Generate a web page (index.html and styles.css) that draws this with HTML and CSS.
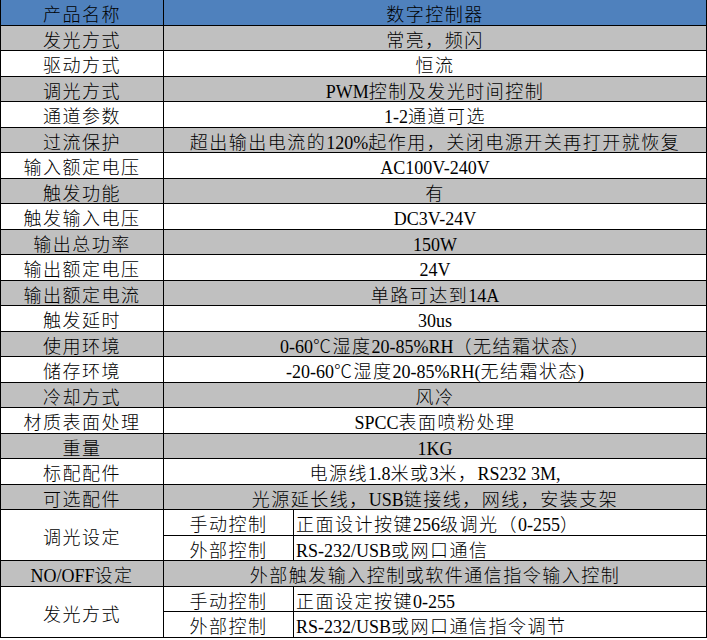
FILE: index.html
```html
<!DOCTYPE html>
<html lang="zh-CN">
<head>
<meta charset="utf-8">
<title>数字控制器参数</title>
<link rel="stylesheet" href="styles.css">
</head>
<body>
<table class="spec">
  <colgroup>
    <col class="c-name">
    <col class="c-sub">
    <col class="c-val">
  </colgroup>
  <tbody>
    <tr class="head"><td>产品名称</td><td colspan="2">数字控制器</td></tr>
    <tr class="gray"><td>发光方式</td><td colspan="2">常亮，频闪</td></tr>
    <tr><td>驱动方式</td><td colspan="2">恒流</td></tr>
    <tr class="gray"><td>调光方式</td><td colspan="2"><span class="en">PWM</span>控制及发光时间控制</td></tr>
    <tr><td>通道参数</td><td colspan="2"><span class="en">1-2</span>通道可选</td></tr>
    <tr class="gray"><td>过流保护</td><td colspan="2">超出输出电流的<span class="en">120%</span>起作用，关闭电源开关再打开就恢复</td></tr>
    <tr><td>输入额定电压</td><td colspan="2"><span class="en">AC100V-240V</span></td></tr>
    <tr class="gray"><td>触发功能</td><td colspan="2">有</td></tr>
    <tr><td>触发输入电压</td><td colspan="2"><span class="en">DC3V-24V</span></td></tr>
    <tr class="gray"><td>输出总功率</td><td colspan="2"><span class="en">150W</span></td></tr>
    <tr><td>输出额定电压</td><td colspan="2"><span class="en">24V</span></td></tr>
    <tr class="gray"><td>输出额定电流</td><td colspan="2">单路可达到<span class="en">14A</span></td></tr>
    <tr><td>触发延时</td><td colspan="2"><span class="en">30us</span></td></tr>
    <tr class="gray"><td>使用环境</td><td colspan="2"><span class="en">0-60</span>℃湿度<span class="en">20-85%RH</span>（无结霜状态）</td></tr>
    <tr><td>储存环境</td><td colspan="2"><span class="en">-20-60</span>℃湿度<span class="en">20-85%RH(</span>无结霜状态<span class="en">)</span></td></tr>
    <tr class="gray"><td>冷却方式</td><td colspan="2">风冷</td></tr>
    <tr><td>材质表面处理</td><td colspan="2"><span class="en">SPCC</span>表面喷粉处理</td></tr>
    <tr class="gray"><td>重量</td><td colspan="2"><span class="en">1KG</span></td></tr>
    <tr><td>标配配件</td><td colspan="2">电源线<span class="en">1.8</span>米或<span class="en">3</span>米，<span class="en">RS232 3M,</span></td></tr>
    <tr class="gray"><td>可选配件</td><td colspan="2">光源延长线，<span class="en">USB</span>链接线，网线，安装支架</td></tr>
    <tr><td rowspan="2">调光设定</td><td>手动控制</td><td class="left">正面设计按键<span class="en">256</span>级调光（<span class="en">0-255</span>）</td></tr>
    <tr><td>外部控制</td><td class="left"><span class="en">RS-232/USB</span>或网口通信</td></tr>
    <tr class="gray"><td><span class="en">NO/OFF</span>设定</td><td colspan="2">外部触发输入控制或软件通信指令输入控制</td></tr>
    <tr><td rowspan="2">发光方式</td><td>手动控制</td><td class="left">正面设定按键<span class="en">0-255</span></td></tr>
    <tr><td>外部控制</td><td class="left"><span class="en">RS-232/USB</span>或网口通信指令调节</td></tr>
  </tbody>
</table>
</body>
</html>
```

FILE: styles.css
```css
html, body {
  margin: 0;
  padding: 0;
  background: #ffffff;
}

.spec {
  border-collapse: collapse;
  table-layout: fixed;
  width: 706px;
  margin-top: -1px;
  font-family: "Noto Sans CJK SC", sans-serif;
  font-weight: 300;
  font-size: 18px;
  letter-spacing: 1.5px;
  color: #000000;
}

.c-name { width: 163px; }
.c-sub { width: 130px; }
.c-val { width: 413px; }

.spec tr {
  height: 25.5px;
}

.spec td {
  border: 1px solid #000000;
  padding: 3px 0 0 0;
  line-height: 21px;
  text-align: center;
  vertical-align: middle;
  white-space: nowrap;
}

.spec td.left {
  text-align: left;
  padding-left: 2px;
}

.spec .en {
  font-family: "Liberation Serif", serif;
  font-weight: 400;
  font-size: 18px;
  line-height: 1;
  letter-spacing: 0;
}

.spec tr.head td {
  background: #4f81bd;
}

.spec tr.gray td {
  background: #c0c0c0;
}
```
